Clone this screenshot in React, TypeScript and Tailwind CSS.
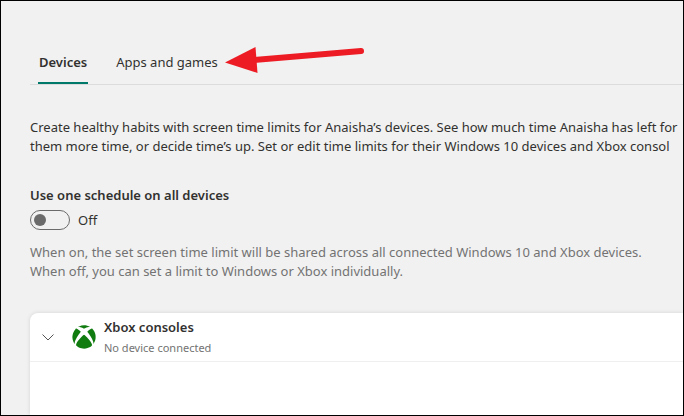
import React, { useState } from 'react';
import { FaXbox } from 'react-icons/fa';

const tabs = ['Devices', 'Apps and games'];

const TabBar = () => {
  const [active, setActive] = useState('Devices');

  return (
    <div role="tablist" className="flex gap-3 border-b border-[#dcdcdc] pl-2">
      {tabs.map((tab) => (
        <button
          key={tab}
          role="tab"
          aria-selected={active === tab}
          onClick={() => setActive(tab)}
          className={
            active === tab
              ? 'h-8 border-b-2 border-[#00786a] px-px pb-2.5 font-semibold'
              : 'h-8 border-b-2 border-transparent px-4 pb-2.5'
          }
        >
          {tab}
        </button>
      ))}
    </div>
  );
};

const ScheduleToggle = () => {
  const [on, setOn] = useState(false);

  return (
    <section className="mt-[30px]">
      <h2 id="schedule-title" className="font-semibold">Use one schedule on all devices</h2>
      <div className="mt-[5px] flex items-center gap-2">
        <input
          id="schedule"
          type="checkbox"
          role="switch"
          aria-labelledby="schedule-title"
          checked={on}
          onChange={(e) => setOn(e.target.checked)}
          className="flex h-5 w-10 appearance-none items-center rounded-full border border-[#6b6b6b] px-[3px] before:size-3 before:rounded-full before:bg-[#6b6b6b] checked:justify-end"
        />
        <label htmlFor="schedule">{on ? 'On' : 'Off'}</label>
      </div>
      <p className="mt-[13px] text-[#737373]">
        When on, the set screen time limit will be shared across all connected Windows 10 and Xbox devices.
        <br />
        When off, you can set a limit to Windows or Xbox individually.
      </p>
    </section>
  );
};

const ConsoleCard = () => (
  <section className="mt-8 flex-1 rounded-tl-lg bg-white shadow-[0_0_4px_rgba(0,0,0,0.12)]">
    <div className="flex h-[49px] items-center border-b border-[#efefef] pl-3">
      <button aria-label="Expand Xbox consoles" className="text-[#555]">
        <svg viewBox="0 0 12 12" className="size-3" fill="none" stroke="currentColor">
          <path d="M0.5 3.5 6 9l5.500-5.500" />
        </svg>
      </button>
      <FaXbox className="ml-[18px] size-6 text-[#107c10]" />
      <div className="ml-2">
        <h3 className="font-semibold">Xbox consoles</h3>
        <p className="mt-px text-[11px] text-[#737373]">No device connected</p>
      </div>
    </div>
  </section>
);

// Red pointer laid over the tabs
const Arrow = () => (
  <svg
    viewBox="0 0 140 30"
    className="pointer-events-none absolute top-[44px] left-[224px] h-[30px] w-[140px]"
    aria-hidden="true"
  >
    <path d="M0 17.500 30.500 2 32.500 28z" fill="#ed1c24" />
    <path d="M28 15 136 6" stroke="#ed1c24" strokeWidth="6" strokeLinecap="round" />
  </svg>
);

export default function App() {
  return (
    <div className="relative flex min-h-screen flex-col overflow-hidden border border-black bg-[#f1f1f1] pt-[51px] pl-[29px] font-['Noto_Sans',sans-serif] text-[13px] leading-[19px] whitespace-nowrap text-[#323130]">
      <TabBar />
      <p className="mt-[33px]">
        Create healthy habits with screen time limits for Anaisha’s devices. See how much time Anaisha has left for
        <br />
        them more time, or decide time’s up. Set or edit time limits for their Windows 10 devices and Xbox consol
      </p>
      <ScheduleToggle />
      <ConsoleCard />
      <Arrow />
    </div>
  );
}
